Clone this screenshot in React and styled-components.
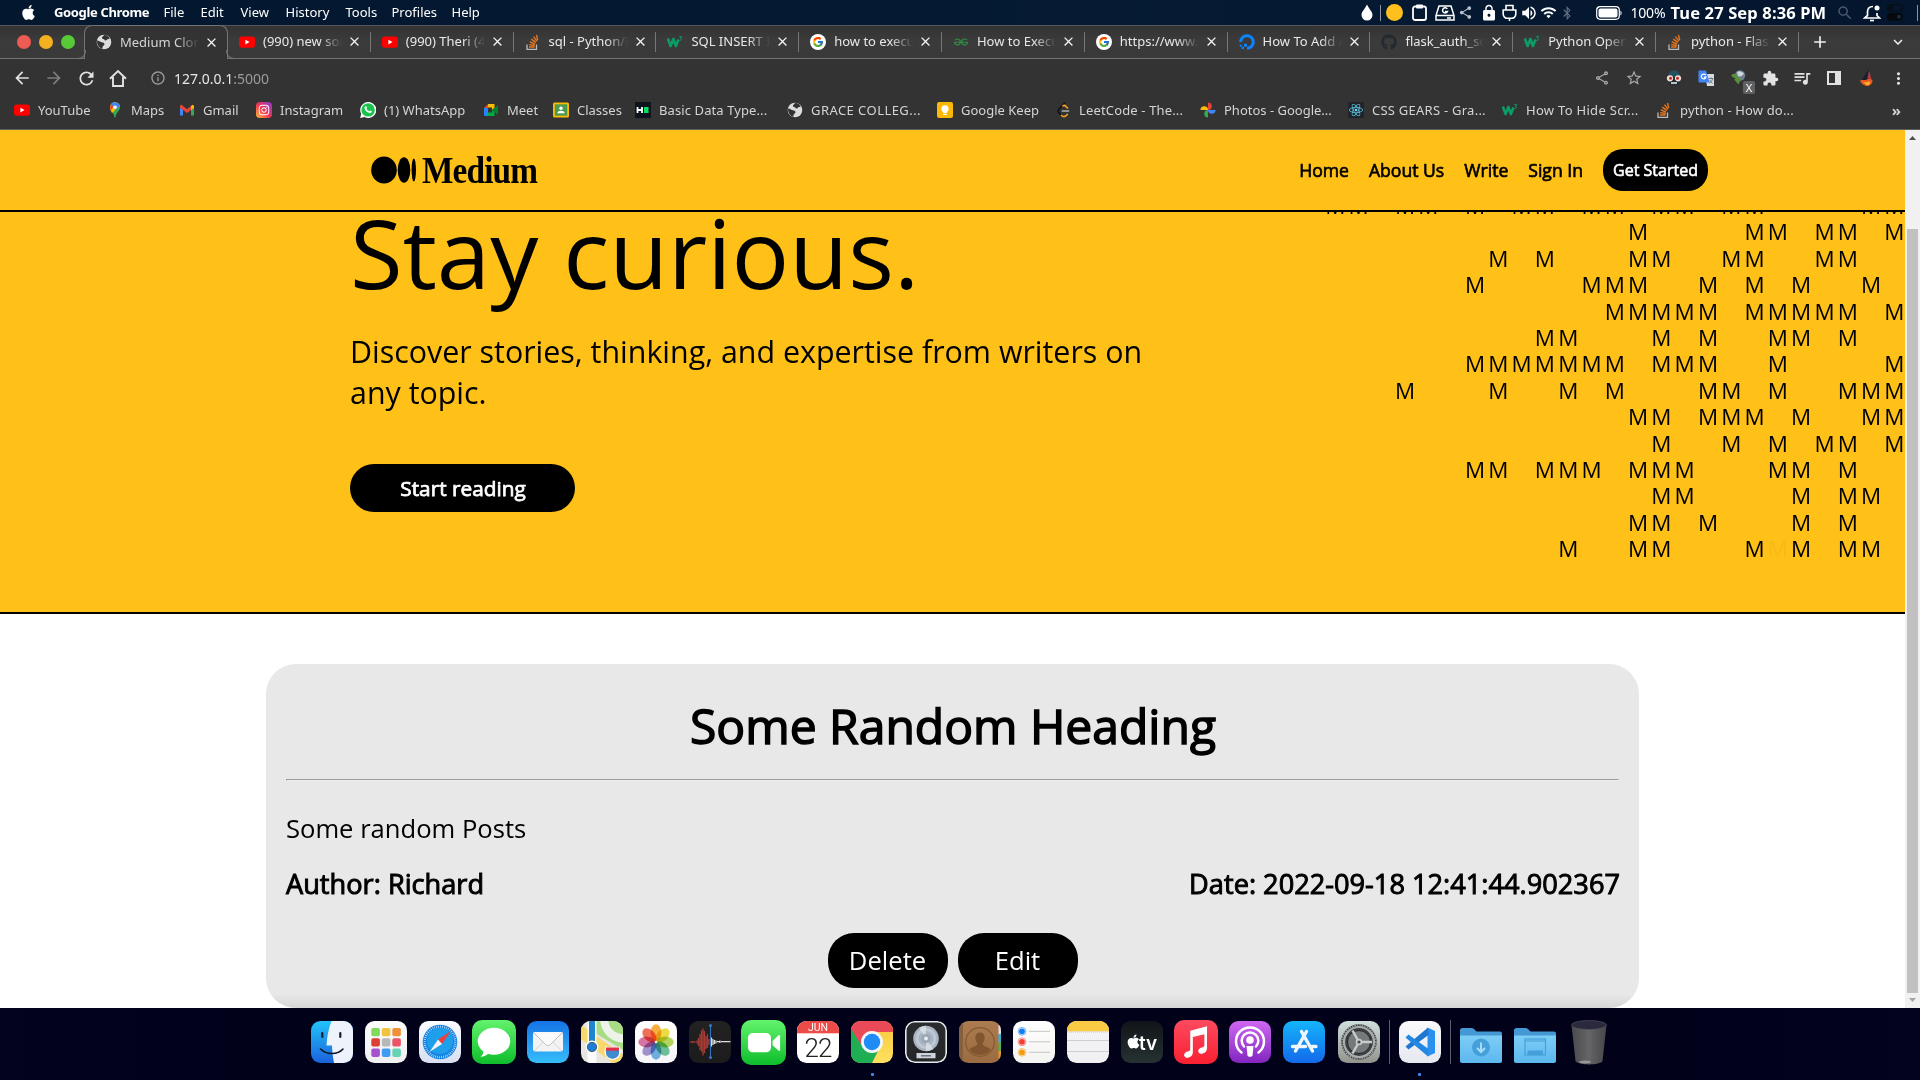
import React from "react";
import styled, { createGlobalStyle, css } from "styled-components";
import { FaApple, FaDigitalOcean, FaGithub, FaInstagram, FaReact, FaBluetoothB } from "react-icons/fa";
import { FcGoogle } from "react-icons/fc";
import { SiGeeksforgeeks } from "react-icons/si";
import {
  MdArrowBack, MdArrowForward, MdRefresh, MdInfoOutline, MdOutlineShare, MdShare, MdStarBorder,
  MdExtension, MdQueueMusic, MdMoreVert, MdClose, MdAdd, MdExpandMore, MdLock, MdVolumeUp, MdWifi,
  MdSearch,
} from "react-icons/md";

const Global = createGlobalStyle`
  * { box-sizing: border-box; }
  html, body { margin: 0; padding: 0; overflow: hidden; background: #02011a; }
  svg { display: block; flex: none; }
  button { font: inherit; border: 0; padding: 0; cursor: pointer; }
`;

const uiFont = `"Noto Sans", "Open Sans", sans-serif`;
const pageFont = `"Open Sans", "Noto Sans", sans-serif`;

const Screen = styled.div`
  width: 1920px;
  height: 1080px;
  display: flex;
  flex-direction: column;
  overflow: hidden;
  font-family: ${uiFont};
`;

/* ---------- system menu bar ---------- */
const MenuBar = styled.header`
  height: 25px;
  flex: none;
  display: flex;
  justify-content: space-between;
  background: linear-gradient(90deg, #03182f, #051a33 60%, #04162e);
  color: #fff;
  font-size: 13px;
`;
const Menus = styled.div`
  display: flex;
  align-items: center;
  padding: 0 0 1px 20px;
  white-space: nowrap;
`;
const MenuItem = styled.span`
  width: ${(p) => p.$w}px;
  letter-spacing: ${(p) => p.$ls || 0}px;
  font-weight: ${(p) => (p.$bold ? 700 : 400)};
`;
const Status = styled.div`
  display: flex;
  align-items: center;
`;
const Slot = styled.span`
  width: ${(p) => p.$w}px;
  height: 24px;
  display: flex;
  align-items: center;
  justify-content: ${(p) => (p.$end ? "flex-end" : "center")};
  padding-right: ${(p) => p.$end || 0}px;
  color: ${(p) => p.$c || "#fff"};
`;
const Percent = styled.span`
  width: 40px;
  font-size: 14px;
  letter-spacing: -0.2px;
  line-height: 23px;
`;
const Clock = styled.span`
  width: 162px;
  font-size: 16.5px;
  letter-spacing: 0.13px;
  line-height: 22px;
  font-weight: 700;
  white-space: nowrap;
`;
const Bar = styled.span`
  width: 1px;
  height: 16px;
  background: #8b95a3;
`;
const Sun = styled.span`
  width: 17px;
  height: 17px;
  border-radius: 50%;
  background: #ffc01e;
`;

/* ---------- browser chrome ---------- */
const Strip = styled.div`
  height: 34px;
  flex: none;
  display: flex;
  border-top: 1px solid #56585c;
  border-bottom: 1px solid #747474;
  background: linear-gradient(#333, #3b3b3b 45%, #393939);
`;
const Lights = styled.div`
  width: 84px;
  display: flex;
  align-items: center;
  gap: 8px;
  padding-left: 17px;
`;
const Light = styled.span`
  width: 14px;
  height: 14px;
  border-radius: 50%;
  background: ${(p) => p.$c};
`;
const Tab = styled.div`
  width: ${(p) => (p.$active ? 144 : 142.8)}px;
  display: flex;
  align-items: center;
  padding: 0 0 1px 11px;
  color: #e8e8e8;
  position: relative;
  ${(p) =>
    p.$active &&
    css`
      color: #d6d6d6;
      background: #333;
      margin-top: -1px;
      margin-bottom: -1px;
      border: 1px solid #747474;
      border-bottom: 0;
      border-radius: 8px 8px 0 0;
      padding-left: 11px;
      &::before,
      &::after {
        content: "";
        position: absolute;
        bottom: 0;
        width: 8px;
        height: 8px;
        border-bottom: 1px solid #747474;
      }
      &::before { left: -8px; border-right: 1px solid #747474; border-bottom-right-radius: 8px; }
      &::after { right: -8px; border-left: 1px solid #747474; border-bottom-left-radius: 8px; }
    `}
`;
const TabTitle = styled.span`
  width: 79px;
  margin: 0 5px 0 8px;
  font-size: 13px;
  line-height: 18px;
  padding-bottom: 1px;
  white-space: nowrap;
  overflow: hidden;
  mask-image: linear-gradient(90deg, #000 72%, transparent);
`;
const TabEdge = styled.span`
  width: 1px;
  height: 20px;
  margin-left: auto;
  background: ${(p) => (p.$hide ? "transparent" : "#777")};
`;
const StripEnd = styled.div`
  flex: 1;
  display: flex;
  align-items: center;
  justify-content: space-between;
  color: #f1f1f1;
  padding: 0 13px 0 11px;
`;
const Toolbar = styled.div`
  height: 39px;
  flex: none;
  display: flex;
  align-items: center;
  background: #333;
  color: #e2e2e2;
  padding: 0 6px 1px;
`;
const Address = styled.div`
  flex: 1;
  display: flex;
  align-items: center;
  padding-left: 16px;
  gap: 8px;
  font-size: 14px;
  color: #9b9b9b;
  b { font-weight: 400; color: #e6e6e6; }
`;
const ToolSlot = styled.span`
  width: 32px;
  display: flex;
  justify-content: center;
  color: ${(p) => p.$c || "#e2e2e2"};
  margin-left: ${(p) => p.$ml || 0}px;
`;
const Bookmarks = styled.div`
  height: 32px;
  flex: none;
  display: flex;
  align-items: center;
  background: #333;
  border-bottom: 1px solid #5c5c5c;
  padding: 0 0 7px 14px;
  color: #d4d4d4;
  font-size: 13px;
`;
const Bookmark = styled.span`
  width: ${(p) => p.$w}px;
  flex: none;
  display: flex;
  align-items: center;
  gap: 8px;
  white-space: nowrap;
  letter-spacing: ${(p) => p.$ls || 0}px;
`;
const More = styled.span`
  margin-left: auto;
  padding-right: 19px;
  font-size: 15px;
  font-weight: 700;
  line-height: 20px;
`;
const Badge = styled.span`
  position: absolute;
  right: -9px;
  bottom: -8px;
  width: 12px;
  height: 13px;
  font-size: 11px;
  line-height: 13px;
  text-align: center;
  border-radius: 2px;
  background: #5f6163;
  color: #fff;
`;
const BadgeHost = styled.span`
  position: relative;
`;

/* ---------- page ---------- */
const Viewport = styled.div`
  height: 878px;
  flex: none;
  display: flex;
  background: #fff;
`;
const Page = styled.main`
  width: 1905px;
  font-family: ${pageFont};
  color: #000;
  display: flex;
  flex-direction: column;
`;
const heavy = (w) => css`
  font-weight: 400;
  -webkit-text-stroke: ${w}px currentColor;
`;
const Nav = styled.nav`
  height: 82px;
  flex: none;
  display: flex;
  align-items: center;
  justify-content: space-between;
  padding: 0 197px 0 371px;
  background: #ffc017;
  border-bottom: 2px solid #000;
`;
const Logo = styled.div`
  display: flex;
  align-items: center;
  gap: 6px;
`;
const Wordmark = styled.span`
  font-family: "Liberation Serif", serif;
  font-weight: 700;
  font-size: 38px;
  line-height: 40px;
  letter-spacing: -1px;
  transform: scaleX(0.877);
  transform-origin: left;
`;
const Links = styled.div`
  display: flex;
  align-items: center;
  gap: 20px;
  font-size: 17.6px;
`;
const Link = styled.span`
  padding-bottom: 1px;
  ${heavy(0.65)}
`;
const StartedButton = styled.button`
  width: 105px;
  height: 42px;
  border-radius: 20px;
  background: #000;
  color: #fff;
  font-size: 16px;
  ${heavy(0.6)}
`;
const Hero = styled.section`
  height: 402px;
  flex: none;
  display: flex;
  justify-content: space-between;
  padding-left: 350px;
  background: #ffc017;
  border-bottom: 2px solid #000;
  overflow: hidden;
`;
const HeroCopy = styled.div`
  width: 820px;
`;
const HeroTitle = styled.h1`
  margin: 0;
  font-size: 96px;
  line-height: 80px;
  font-weight: 400;
`;
const HeroText = styled.p`
  margin: 39px 0 51px;
  font-size: 30.4px;
  line-height: 41px;
`;
const ReadButton = styled.button`
  width: 225px;
  height: 48px;
  border-radius: 25px;
  background: #000;
  color: #fff;
  font-size: 20.8px;
  padding-left: 1px;
  ${heavy(0.75)}
`;
const Pattern = styled.div`
  flex: none;
  margin: -19px -1px 0 0;
  display: grid;
  grid-template-columns: repeat(25, 23.3px);
  grid-auto-rows: 26.42px;
  line-height: 26.42px;
  height: 370px;
  font-size: 22.4px;
  text-align: center;
`;
const Cell = styled.span`
  opacity: ${(p) => (p.$faint ? 0.03 : 1)};
`;
const Card = styled.article`
  width: 1373px;
  height: 344px;
  margin: 50px auto 0;
  padding: 29px 20px 20px;
  border-radius: 30px;
  background: linear-gradient(#e8e8e8 330px, #d6d6d6 344px);
`;
const CardTitle = styled.h2`
  margin: 0 0 21px;
  padding-left: 1px;
  text-align: center;
  font-size: 48px;
  line-height: 65px;
  ${heavy(1.5)}
`;
const Rule = styled.hr`
  margin: 0;
  border: 1px solid;
  border-color: #9a9a9a #eee #eee #9a9a9a;
`;
const CardText = styled.p`
  margin: 30px 0 19px;
  font-size: 25.6px;
  line-height: 35px;
`;
const Meta = styled.div`
  display: flex;
  justify-content: space-between;
  font-size: 27.2px;
  line-height: 37px;
  margin: 0 -1px 31px 0;
  ${heavy(0.95)}
`;
const Actions = styled.div`
  display: flex;
  justify-content: center;
  gap: 10px;
`;
const ActionButton = styled.button`
  width: 120px;
  height: 55px;
  border-radius: 26px;
  background: #000;
  color: #fff;
  font-size: 25.6px;
`;
const Scrollbar = styled.aside`
  width: 15px;
  background: #f1f1f1;
  display: flex;
  flex-direction: column;
  align-items: center;
  padding-top: 6px;
`;
const Thumb = styled.span`
  width: 11px;
  height: 764px;
  margin: 89px 0 5px;
  background: #c1c1c1;
`;

/* ---------- dock ---------- */
const Dock = styled.footer`
  height: 72px;
  flex: none;
  display: flex;
  padding-left: 304.6px;
  background: linear-gradient(90deg, #03021f, #02011a 15%, #02011a 85%, #03021f);
`;
const DockSlot = styled.div`
  width: 54.05px;
  height: 72px;
  display: flex;
  flex-direction: column;
  align-items: center;
  padding-top: ${(p) => (72 - p.$s) / 2 - 2}px;
`;
const DockLine = styled.span`
  width: 1px;
  height: 44px;
  margin: 12px 3px 0;
  background: #5d5d70;
`;
const Running = styled.span`
  width: 3px;
  height: 3px;
  margin-top: 10px;
  border-radius: 1px;
  background: #3f86f0;
`;

/* ---------- small glyphs ---------- */
const House = () => (
  <svg width="18" height="19" viewBox="0 0 18 19"><path d="M1 9.800 9 2l8 7.800M4 8v9h10V8" fill="none" stroke="#e2e2e2" strokeWidth="1.900" /></svg>
);
const YouTube = () => (
  <svg width="16" height="16" viewBox="0 0 16 16"><rect y="2.4" width="16" height="11.4" rx="2.8" fill="#f00" /><path d="M6.4 5.7v4.8l4.1-2.4z" fill="#fff" /></svg>
);
const W3 = () => (
  <svg width="16" height="16" viewBox="0 0 16 16" fill="none" stroke="#0b9d66" strokeLinejoin="round">
    <path d="M.8 4.5 3.6 12 6.4 5l2.5 7 2.6-6.5" strokeWidth="2.6" /><path d="M12.3 2.6h2.4L13.3 4.4c1.6-.2 1.8 2.4-.9 2" strokeWidth="1" />
  </svg>
);
const GoogleBadge = () => (
  <svg width="16" height="16" viewBox="0 0 16 16"><circle cx="8" cy="8" r="8" fill="#fff" /><g transform="translate(2.1 2.1)"><FcGoogle size={11.8} /></g></svg>
);
const GlobeIcon = () => (
  <svg width="16" height="16" viewBox="0 0 16 16"><circle cx="8" cy="8" r="7.3" fill="#dcdcdc" /><path d="M1.2 6.6c2 .2 2.6 1 3.6 1.5 1.1.6 3.4.2 3.7 1.900.2 1.400-1.600 1.400-1.900 2.700l-.3 2.300C3 14.500.5 10 1.200 6.600zM6 3c1.300-.2 1-1 2-2 2.800-.2 4.500 1.200 5.800 3.400-.9.7-2.200.4-2.900 1.400-.7 1-2.700.8-2.500-.4L6 4.600z" fill="#333" /></svg>
);
const MapsPin = () => (
  <svg width="16" height="16" viewBox="0 0 16 16"><path d="M8 .3a5 5 0 0 1 5 5c0 3.600-4 5.200-4.500 10.200h-1C7 10.500 3 8.900 3 5.300a5 5 0 0 1 5-5z" fill="#34a853" /><path d="M8 .3a5 5 0 0 1 4.800 3.600L5 11C4 9 3 7.800 3 5.300a5 5 0 0 1 5-5z" fill="#fbbc04" /><path d="M8 .3a5 5 0 0 1 4.800 3.600L8.400 8 3.700 2.700A5 5 0 0 1 8 .3z" fill="#4285f4" /><path d="M3.900 2.400 6.600 4.600 4 8.200C3.200 7 2.500 4.300 3.900 2.400z" fill="#ea4335" /><circle cx="8" cy="5.300" r="1.800" fill="#fff" /></svg>
);
const Gmail = () => (
  <svg width="16" height="16" viewBox="0 0 16 16"><path d="M1 4v9.500h3V7z" fill="#4285f4" /><path d="M15 4v9.500h-3V7z" fill="#34a853" /><path d="M1 3.500 2.500 2.800 8 7.300l5.500-4.500L15 3.500V5.800L8 11 1 5.800z" fill="#ea4335" /><path d="M12 4.200 13.500 2.800 15 4v2L12 8z" fill="#fbbc04" /></svg>
);
const Insta = () => (
  <svg width="16" height="16" viewBox="0 0 16 16"><defs><linearGradient id="ig" x1="0" y1="1" x2="1" y2="0"><stop offset="0" stopColor="#ffc13b" /><stop offset=".45" stopColor="#f3344f" /><stop offset="1" stopColor="#8a3ad8" /></linearGradient></defs><rect width="16" height="16" rx="4" fill="url(#ig)" /><g transform="translate(2 2)"><FaInstagram size={12} color="#fff" /></g></svg>
);
const WhatsApp = () => (
  <svg width="16" height="16" viewBox="0 0 16 16"><path d="M8 0a8 8 0 1 1-3.500 15L.2 16l1-4.100A8 8 0 0 1 8 0z" fill="#fff" /><circle cx="8.100" cy="7.900" r="6.700" fill="#18c34e" /><path d="M5.600 4.300c.7-.4 1 .2 1.400 1.400.1.500-.5.800-.5 1.100.5 1.200 1.600 2 2.700 2.500.4 0 .7-1 1.100-.9l1.500.8c.1 1.200-.9 1.800-1.900 1.700C6.800 10.600 4.300 7.700 4.600 5.700c.1-.6.5-1.200 1-1.400z" fill="#fff" /></svg>
);
const Meet = () => (
  <svg width="16" height="16" viewBox="0 0 16 16"><path d="M1 6l4-4v4z" fill="#ea4335" /><path d="M5 2h6.500v4L9 8V5.600H5z" fill="#fbbc04" /><path d="M1 6h4v8H2.200C1.500 14 1 13.500 1 12.800z" fill="#2684fc" /><path d="M5 10.400h4V8l2.500 2v4H5z" fill="#00ac47" /><path d="M9 8l2.500-2L15 3v10l-3.500-3z" fill="#00832d" /></svg>
);
const Classes = () => (
  <svg width="16" height="16" viewBox="0 0 16 16"><rect y=".5" width="16" height="15" rx="1.500" fill="#fbbc04" /><rect x="1.800" y="2.300" width="12.400" height="11.400" fill="#4e9a50" /><circle cx="8" cy="6.200" r="1.700" fill="#fff" /><path d="M4.300 11.300C4.300 8 11.700 8 11.700 11.300z" fill="#fff" /></svg>
);
const Hacker = () => (
  <svg width="16" height="16" viewBox="0 0 16 16"><rect width="16" height="16" fill="#0e141e" /><path d="M2.500 5v6M7 5v6M2.500 8H7" stroke="#fff" strokeWidth="1.800" /><rect x="9" y="5" width="4.500" height="6" fill="#05e062" /></svg>
);
const Keep = () => (
  <svg width="16" height="16" viewBox="0 0 16 16"><rect width="16" height="16" rx="2" fill="#fbb904" /><circle cx="8" cy="6.800" r="3.600" fill="#fff" /><path d="M6.200 9h3.600v2H6.200zM6.200 11.700h3.600v1.300H6.200z" fill="#fff" /></svg>
);
const Leet = () => (
  <svg width="16" height="16" viewBox="0 0 16 16" fill="none" strokeLinecap="round" strokeWidth="1.700"><path d="M9.800 1 4 7c-1 1.200-1 2.600 0 3.700l1.500 1.800" stroke="#111" /><path d="M8 3.800c1-.6 2.200-.2 3.100.8l1.400 1.400M6.500 13.500c1.600 1.500 3.500 1.400 4.800 0l1-1" stroke="#f89f1b" /><path d="M7.500 9h6" stroke="#b3b3b3" /></svg>
);
const Pinwheel = () => (
  <svg width="16" height="16" viewBox="0 0 16 16"><path d="M8 8V.5A3.750 3.750 0 0 1 8 8z" fill="#ea4335" /><path d="M8 8h7.500A3.750 3.750 0 0 1 8 8z" fill="#4285f4" /><path d="M8 8v7.500A3.750 3.750 0 0 1 8 8z" fill="#34a853" /><path d="M8 8H.5A3.750 3.750 0 0 1 8 8z" fill="#fbbc04" /></svg>
);
const ReactBadge = () => (
  <svg width="16" height="16" viewBox="0 0 16 16"><rect width="16" height="16" rx="2" fill="#20232a" /><g transform="translate(1 1)"><FaReact size={14} color="#61dafb" /></g></svg>
);
const Stack = () => (
  <svg width="16" height="16" viewBox="0 0 16 16" fill="none" strokeWidth="1.400"><path d="M2 10.500v4.800h9.500v-4.800" stroke="#bcbbbb" strokeWidth="1.300" /><path d="M4 13h5.600M4.200 10.600l5.500.9M4.800 7.900l5.200 2.100M6.300 5.100l4.600 3.300M8.500 2.700l3.400 4.500M11.500.8l1.200 5.400" stroke="#e8761f" /></svg>
);
const Ninja = () => (
  <svg width="16" height="16" viewBox="0 0 16 16"><path d="M2 7C2 2 5 .5 8 .5S14 2 14 7z" fill="#25505f" /><path d="M3 7h10v7.500H3z" fill="#1b2a33" /><circle cx="4" cy="8.300" r="3.100" fill="#f2ded3" /><circle cx="12" cy="8.300" r="3.100" fill="#f2ded3" /><circle cx="4.500" cy="8.300" r="1.500" fill="#c1271d" /><circle cx="11.500" cy="8.300" r="1.500" fill="#c1271d" /><path d="M5 12h6v2H5z" fill="#b9c5ca" /></svg>
);
const Translate = () => (
  <svg width="17" height="17" viewBox="0 0 17 17"><path d="M7 4h9v12H9z" fill="#d6dce2" /><path d="M10.500 8.500h5M13 7.500v1M14.500 9c-.5 2-2 3.500-3.500 4M11.500 10l3 3.500" stroke="#6c7a85" fill="none" /><path d="M1 .5h7l3.500 12H1.500C1 12.500.5 12 .5 11.500V1z" fill="#4285f4" /><path d="M7.800 5.300A2.400 2.400 0 1 0 8 7.100H5.800" stroke="#fff" strokeWidth="1.200" fill="none" /></svg>
);
const Idm = () => (
  <svg width="16" height="16" viewBox="0 0 16 16"><circle cx="10" cy="5.500" r="5.200" fill="#6f7f8e" /><path d="M7 2c3-2 5 1 7 1-1 3-4 4-6 3z" fill="#ccd6dd" /><path d="M8.500 14.500 4 9.500l1.800-.5L1.200 6C2.200 3.500 4.500 3 6.500 5l3.200 4 1.500-.5z" fill="#56913a" /></svg>
);
const Sail = () => (
  <svg width="17" height="18" viewBox="0 0 17 18"><path d="M11 0 3 12h10z" fill="#1c1d2c" /><path d="M11 1 8.500 11l5.500 1z" fill="#3a3a4e" /><path d="M11 1.500 10 9l3.500 2z" fill="#c43b3b" /><path d="M2 11.500c3-1.500 5 .5 7-1s4-.5 5.500 1c0 3.500-2.500 5.500-6 5.500C5 16 3 14.500 2 11.500z" fill="#e8591f" /><path d="M5 13c2 0 5 1 6-1 2 2 1 4-2 4.500z" fill="#f7b32a" /></svg>
);

/* ---------- dock icons, drawn on a 42 unit tile ---------- */
const Tile = ({ s = 42, id, from, to, children, plain }) => (
  <svg width={s} height={s} viewBox="0 0 42 42">
    <defs>
      <linearGradient id={id} x1="0" y1="0" x2="0" y2="1"><stop offset="0" stopColor={from} /><stop offset="1" stopColor={to} /></linearGradient>
      <clipPath id={id + "c"}><rect width="42" height="42" rx="9.500" /></clipPath>
    </defs>
    {!plain && <rect width="42" height="42" rx="9.500" fill={`url(#${id})`} />}
    <g clipPath={plain ? undefined : `url(#${id}c)`}>{children}</g>
  </svg>
);
const Finder = () => (
  <Tile id="fi" from="#22c4fa" to="#1a62dc">
    <path d="M20.500 0C17.500 8 16 16 15.500 24.500H21c.2 6 .8 12 2.200 18H42V0z" fill="#eef3fb" />
    <path d="M11.300 12v4M29.300 12v4" stroke="#10202e" strokeWidth="2.200" strokeLinecap="round" />
    <path d="M9.500 28c6 6 17 6 22.500 0" stroke="#0b1620" strokeWidth="1.600" fill="none" strokeLinecap="round" />
  </Tile>
);
const pads = ["#82da5a", "#f2c340", "#f0913a", "#dc4034", "#b8b8b8", "#ec5468", "#a552cf", "#3e9df2", "#66d3b4"];
const Launchpad = () => (
  <Tile id="la" from="#fdfdfd" to="#efefef">
    {pads.map((c, i) => <rect key={c} x={6.3 + (i % 3) * 10.5} y={7 + Math.floor(i / 3) * 10.3} width="8.600" height="8.300" rx="1.800" fill={c} />)}
  </Tile>
);
const Safari = () => (
  <Tile id="sa" from="#fbfcfe" to="#d9dff0">
    <circle cx="21" cy="21" r="17.300" fill="#1684e4" /><circle cx="21" cy="20" r="13" fill="#22aef0" opacity=".65" />
    <circle cx="21" cy="21" r="15.300" fill="none" stroke="#e4f3ff" strokeWidth="2.300" strokeDasharray=".6 1.400" />
    <path d="M32 10 19 18.500 23 23z" fill="#f23d3a" /><path d="M10.500 31 19 18.500 23 23z" fill="#f2f4f6" />
  </Tile>
);
const Messages = () => (
  <Tile s={44} id="me" from="#62f36d" to="#0fbd2c">
    <ellipse cx="21" cy="20.300" rx="15.500" ry="12.800" fill="#fff" /><path d="M11 29c0 3-1 4.500-3 6 4 0 6.500-1.500 8-3.500z" fill="#fff" />
  </Tile>
);
const Mail = () => (
  <Tile id="ma" from="#1573e6" to="#36bdfa">
    <rect x="6" y="11" width="30" height="19.500" rx="2" fill="#f3f3f3" /><path d="M7 30 17 20.500M35 30 25 20.500" stroke="#ccc" strokeWidth=".8" /><path d="M6.500 11.500 18.500 23.500c1.500 1.400 3.500 1.400 5 0l12-12" fill="#fafafa" stroke="#bbb" strokeWidth=".9" />
  </Tile>
);
const Maps = () => (
  <Tile id="mp" from="#e9e5df" to="#e9e5df">
    <path d="M0 4 42 34v8H32L0 18z" fill="#f6d96a" /><path d="M13 0h29v29L14 12z" fill="#a8dd86" /><path d="M19-2c1 14 10 23 25 24v-8C33 12 28 8 27-2z" fill="#eef3ea" />
    <path d="M6.500 0h9v42h-9z" fill="#fbfbfb" /><path d="M8 0h6v24H8z" fill="#1f84cb" /><circle cx="11" cy="26" r="6.500" fill="#fff" /><circle cx="11" cy="26" r="4.700" fill="#1e7fd2" stroke="#1b3850" strokeWidth=".7" />
    <path d="M25 26c5 1.500 8 1.500 13 0 2 6 1 11-6.500 12.500C24 37 23 32 25 26z" fill="#3f8bd0" stroke="#fff" strokeWidth="1.200" /><path d="M25 26.500h13v3.300H24.800z" fill="#e0314b" />
  </Tile>
);
const petals = ["#f7a325", "#e9d727", "#a8cf43", "#58b487", "#5aa2d8", "#8f83c4", "#d35f94", "#ee5a40"];
const Petal = styled.ellipse`
  mix-blend-mode: multiply;
`;
const Photos = () => (
  <Tile id="ph" from="#fff" to="#f6f6fa">
    {petals.map((c, i) => <Petal key={c} cx="21" cy="11.700" rx="5.400" ry="8.400" fill={c} opacity=".87" transform={`rotate(${i * 45} 21 21)`} />)}
  </Tile>
);
const Voice = () => (
  <Tile id="vo" from="#222" to="#1c1c1c">
    <path d="M1.500 21h5M8 19.500v3M9.500 17v8M11 13v16M12.500 9.500v21M14 7.500v27M15.500 10v22M17 15v13M18.500 13v14M20 18v6" stroke="#a83c34" strokeWidth="1.300" />
    <path d="M22.500 16.500v9M24 18v6M25.500 19v4M27 19.500v3M28 20.700h3.500M31 19.500v2.500M32 20.700h9.500" stroke="#ddd" strokeWidth="1.200" /><path d="M21.500 4v33" stroke="#3676c6" strokeWidth="1" /><circle cx="21.500" cy="4.500" r="1.500" fill="#3676c6" /><circle cx="21.500" cy="36.500" r="1.500" fill="#3676c6" />
  </Tile>
);
const FaceTime = () => (
  <Tile s={45} id="fa" from="#62f36d" to="#0fbd2c"><rect x="6.500" y="12.200" width="21.500" height="18" rx="4.500" fill="#fff" /><path d="M29.500 19.500 35 14.300c.8-.7 1.500-.4 1.500.6v13c0 1-.7 1.300-1.500.6l-5.500-5z" fill="#fff" /></Tile>
);
const Calendar = () => (
  <Tile id="ca" from="#fff" to="#fff"><rect width="42" height="12.300" fill="#ec4b48" />
    <text x="21" y="10.300" textAnchor="middle" fontFamily="Roboto, sans-serif" fontSize="10.500" fill="#fff">JUN</text>
    <text x="21" y="36" textAnchor="middle" fontFamily="Roboto, sans-serif" fontWeight="300" fontSize="26" letterSpacing="-1" fill="#222">22</text>
  </Tile>
);
const Chrome = () => (
  <Tile id="ch" from="#f9c83b" to="#ffe060">
    <path d="M0 0h42v11H22L10 27 0 10z" fill="#ea4a58" /><path d="M0 8 11 25l16 5-6 12H0z" fill="#1fae53" /><circle cx="21" cy="21" r="11" fill="#f2f5fa" /><circle cx="21" cy="21" r="8.200" fill="#1f8cf6" />
  </Tile>
);
const Logic = () => (
  <Tile id="lo" from="#2a2c2e" to="#232526"><rect x=".8" y=".8" width="40.400" height="40.400" rx="9" fill="none" stroke="#e6e9ec" strokeWidth="1.600" /><circle cx="21" cy="17.500" r="12.800" fill="#a9b4c2" /><circle cx="21" cy="17.500" r="9" fill="none" stroke="#bfc8d4" strokeWidth="3" /><path d="M21 17.500 14 6.800a12.800 12.800 0 0 1 7-2.100zM21 17.500 28 28.200a12.800 12.800 0 0 1-7 2.100z" fill="#dfe5ed" opacity=".7" /><circle cx="21" cy="17.500" r="4.500" fill="#9aa5b3" /><circle cx="21" cy="17.500" r="2" fill="#e6eaf0" /><rect x="11.500" y="32" width="19" height="5.300" fill="#cfd5dc" /><path d="M16 34.700h10" stroke="#6d747c" strokeWidth="1.400" /></Tile>
);
const Contacts = () => (
  <Tile id="co" from="#ac7b4f" to="#9b6c42"><path d="M0 0h4v42H0z" fill="#85603f" /><path d="M39.500 4h3v9h-3z" fill="#ddd" /><path d="M39.500 13h3v8h-3z" fill="#3eb2d4" /><path d="M39.500 21h3v9h-3z" fill="#58b14c" /><path d="M39.500 30h3v8h-3z" fill="#e09a2e" /><circle cx="21" cy="21" r="14.300" fill="none" stroke="#85592f" strokeWidth="1.200" /><path d="M21 11.500c6 0 5.500 8 2.500 11 .3 3.500 7 3 8 6.500-5.500 6.500-15.500 6.500-21 0 1-3.500 7.700-3 8-6.500-3-3-3.500-11 2.500-11z" fill="#80552f" /></Tile>
);
const Reminders = () => (
  <Tile id="re" from="#fff" to="#f3f3f1">{["#0f7df5", "#f23c34", "#f79a0c"].map((c, i) => <g key={c}><circle cx="9" cy={10.3 + i * 10.5} r="3.900" fill="none" stroke={c} strokeWidth=".8" opacity=".7" /><circle cx="9" cy={10.3 + i * 10.5} r="2.900" fill={c} /><path d={`M16 ${10.3 + i * 10.5}h21`} stroke="#c5c5c5" /></g>)}</Tile>
);
const Notes = () => (
  <Tile id="no" from="#f4f3f5" to="#f0eff1"><rect width="42" height="10.300" fill="#fbca45" /><path d="M0 11h42" stroke="#bdb9b0" strokeDasharray="1 1" strokeWidth=".8" /><path d="M0 19.500h42M0 30.500h42" stroke="#cfcdd2" /></Tile>
);
const AppleTV = () => (
  <Tile id="tv" from="#101418" to="#263231"><g transform="translate(4.500 12.500)"><FaApple size={16} color="#fff" /></g><text x="18" y="28.500" fontFamily="Inter, sans-serif" fontWeight="600" fontSize="19" fill="#fff">tv</text></Tile>
);
const Music = () => (
  <Tile s={44} id="mu" from="#fb4a60" to="#fa2032"><path d="M15.500 10.200 31.500 6v21c0 3-2 4.700-4.800 5.200-3.300.5-4.700-3.200-2.200-5 1.500-1 4.500-.8 4.500-3V13.500l-11 2.800v14.500c0 3-1.800 4.700-4.700 5.200-3.500.5-4.900-3.200-2.300-5 1.500-1 4.500-.8 4.500-3z" fill="#fff" /></Tile>
);
const Podcasts = () => (
  <Tile id="po" from="#cf68f2" to="#8226c0"><g fill="none" stroke="#fff" strokeWidth="2.500" strokeLinecap="round"><path d="M12.500 31.500a14 14 0 1 1 17 0" /><path d="M15 25.500a8.300 8.300 0 1 1 12 0" /></g><circle cx="21" cy="19" r="3.800" fill="#fff" /><path d="M17.500 25h7l-1 9.500c-.3 1.700-4.700 1.700-5 0z" fill="#fff" /></Tile>
);
const AppStore = () => (
  <Tile id="as" from="#15b4fb" to="#1369ea"><g stroke="#eef6fe" strokeWidth="3.400" strokeLinecap="round" fill="none"><path d="M18.500 10.500 29.500 30M23.500 10.500 12.500 30M9.500 25.500h13M29 25.500h4" /></g></Tile>
);
const Settings = () => (
  <Tile id="se" from="#cfdfdd" to="#93938c"><circle cx="21" cy="21" r="17.800" fill="#3e4042" /><circle cx="21" cy="21" r="15" fill="none" stroke="#a9adad" strokeWidth="2.200" /><circle cx="21" cy="21" r="17" fill="none" stroke="#b0b4b4" strokeWidth="1.200" strokeDasharray="1.300 1.200" /><circle cx="21" cy="21" r="11.500" fill="#74797b" stroke="#24272a" /><path d="M21 21 14.500 9.500M21 21h13M21 21 14.500 32.500" stroke="#c8cccb" strokeWidth="2.500" /><circle cx="21" cy="21" r="3.300" fill="#c8cccb" /><circle cx="21" cy="21" r="1.600" fill="#44484b" /></Tile>
);
const Code = () => (
  <Tile id="vs" from="#fafafc" to="#e6e8f0"><path d="M28.500 6.500 36 10v22l-7.500 3.500z" fill="#2a90ee" /><path d="M29 6.500 6.500 25.500l3 3L29.500 14z" fill="#1f78cf" /><path d="M29 35.500 6.500 16.500l3-3L29.500 28z" fill="#2289e2" /></Tile>
);
const Folder = ({ kind }) => (
  <Tile id={"fo" + kind} from="#7dcdf6" to="#5cb8ee" plain>
    <path d="M0 9.500C0 8 1 7 2.500 7h9c1 0 1.700.3 2.500 1l2.500 2.500H40c1.200 0 2 .8 2 2V20H0z" fill="#4498d3" />
    <path d="M0 14.500h42V40c0 1-.8 2-2 2H2c-1.200 0-2-1-2-2z" fill={`url(#fo${kind})`} />
    {kind === "down" ? <><circle cx="21" cy="26.500" r="9" fill="#459fda" /><path d="M21 21.500v9M17 27l4 4 4-4" stroke="#a5dcf8" strokeWidth="2" fill="none" /></> : <><rect x="11" y="18" width="20.500" height="16" fill="none" stroke="#459fda" strokeWidth="1.200" /><path d="M11 20h20.500" stroke="#459fda" /><path d="M13.500 29.500h15.500V34H13.500z" fill="#459fda" /></>}
  </Tile>
);
const Trash = () => (
  <svg width="36" height="46" viewBox="0 0 36 46"><defs><linearGradient id="tr" x1="0" x2="1"><stop offset="0" stopColor="#4a4a4e" /><stop offset=".5" stopColor="#656567" /><stop offset="1" stopColor="#464649" /></linearGradient></defs><path d="M.5 5 4.500 41c2 4.500 25 4.500 27 0L35.500 5z" fill="url(#tr)" /><ellipse cx="18" cy="5" rx="17.500" ry="4.500" fill="#2b2a3d" stroke="#57576a" strokeWidth=".6" /><ellipse cx="14" cy="42" rx="6" ry="1.500" fill="#b0b0b0" opacity=".7" /></svg>
);

/* ---------- data ---------- */
const menus = [["File", 37], ["Edit", 40], ["View", 45], ["History", 60], ["Tools", 46], ["Profiles", 60], ["Help", 40]];
const tabs = [
  [GlobeIcon, "Medium Clone"],
  [YouTube, "(990) new songs"],
  [YouTube, "(990) Theri (4K"],
  [Stack, "sql - Python/Flask"],
  [W3, "SQL INSERT INTO"],
  [GoogleBadge, "how to execute"],
  [() => <SiGeeksforgeeks size={14} color="#2f8d46" />, "How to Execute"],
  [GoogleBadge, "https://www.goo"],
  [() => <FaDigitalOcean size={16} color="#0a84ff" />, "How To Add Auth"],
  [() => <FaGithub size={16} color="#24292f" />, "flask_auth_scotch"],
  [W3, "Python Operators"],
  [Stack, "python - Flask"],
];
const bookmarks = [
  [YouTube, "YouTube", 93], [MapsPin, "Maps", 72], [Gmail, "Gmail", 77], [Insta, "Instagram", 104], [WhatsApp, "(1) WhatsApp", 123],
  [Meet, "Meet", 70], [Classes, "Classes", 82], [Hacker, "Basic Data Type...", 152, 0.1], [GlobeIcon, "GRACE COLLEG...", 150, 0.45],
  [Keep, "Google Keep", 118], [Leet, "LeetCode - The...", 145, 0.15], [Pinwheel, "Photos - Google...", 148], [ReactBadge, "CSS GEARS - Gra...", 154, 0.25],
  [W3, "How To Hide Scr...", 154, 0.3], [Stack, "python - How do...", 160, 0.15],
];
const pattern = [
  "MM.MM.M.MM.MM.MM.MM....MM",
  ".............M....MM.MM.M",
  ".......M.M...MM..MM..MM..",
  "......M....MMM..M.M.M..M.",
  "............MMMMM.MMMMM.M",
  ".........MM...M.M..MM.M..",
  "......MMMMMMM.MMM..M....M",
  "...M...M..M.M...MM.M..MMM",
  ".............MM.MMM.M..MM",
  "..............M..M.M.MM.M",
  "......MM.MMM.MMM...MM.M..",
  "..............MM....M.MM.",
  ".............MM.M...M.M..",
  "..........M..MM...MmM.MM.",
];
const dockApps = [
  [Finder], [Launchpad], [Safari], [Messages, 44], [Mail], [Maps], [Photos], [Voice], [FaceTime, 45], [Calendar], [Chrome, 42, true],
  [Logic], [Contacts], [Reminders], [Notes], [AppleTV], [Music, 44], [Podcasts], [AppStore], [Settings],
];

export default function App() {
  return (
    <Screen>
      <Global />
      <MenuBar>
        <Menus>
          <MenuItem $w={34}><FaApple size={17} /></MenuItem>
          <MenuItem $w={109.5} $bold $ls={-0.35}>Google Chrome</MenuItem>
          {menus.map(([t, w]) => <MenuItem key={t} $w={w}>{t}</MenuItem>)}
        </Menus>
        <Status>
          <Slot $w={22}>
            <svg width="12" height="17" viewBox="0 0 12 17"><path d="M6 .5c2 4.500 5.500 7 5.500 10.500a5.500 5.500 0 0 1-11 0C.5 7.500 4 5 6 .5z" fill="#fff" /></svg>
          </Slot>
          <Slot $w={6}><Bar /></Slot>
          <Slot $w={22}><Sun /></Slot>
          <Slot $w={28}>
            <svg width="15" height="17" viewBox="0 0 15 17"><rect x="1" y="2.500" width="13" height="13.500" rx="2" fill="none" stroke="#fff" strokeWidth="1.800" /><rect x="4" y=".5" width="7" height="4" rx="1" fill="#fff" /></svg>
          </Slot>
          <Slot $w={22}>
            <svg width="20" height="16" viewBox="0 0 20 16" fill="none" stroke="#fff" strokeWidth="1.500"><path d="M4 1h12l3 9.500v4.500H1v-4.500zM1 10.500h18" /><path d="M12.300 3.800a2.600 2.600 0 1 0 .2 2.600H10M12 13h4" /></svg>
          </Slot>
          <Slot $w={20} $c="#b9c3cf"><MdShare size={15} /></Slot>
          <Slot $w={26}><MdLock size={18} /></Slot>
          <Slot $w={16}>
            <svg width="15" height="17" viewBox="0 0 15 17" fill="none" stroke="#fff" strokeWidth="1.600"><path d="M4 6V1.500h7V6M1.200 6h12.600v4c0 3-2.500 4.300-4 4.300H5.200c-1.500 0-4-1.300-4-4.300zM7.500 14v3" /></svg>
          </Slot>
          <Slot $w={22}><MdVolumeUp size={18} /></Slot>
          <Slot $w={18}><MdWifi size={17} /></Slot>
          <Slot $w={18} $c="#5f6f84"><FaBluetoothB size={14} /></Slot>
          <Slot $w={55} $end={9}>
            <svg width="26" height="14" viewBox="0 0 26 14"><rect x=".7" y=".7" width="22.600" height="12.600" rx="3.500" fill="none" stroke="#fff" strokeWidth="1.200" /><rect x="2.500" y="2.500" width="19" height="9" rx="2" fill="#fff" /><path d="M24.500 4.500c1.500 1 1.500 4 0 5z" fill="#fff" /></svg>
          </Slot>
          <Percent>100%</Percent>
          <Clock>Tue 27 Sep 8:36 PM</Clock>
          <Slot $w={24} $c="#4a5769"><MdSearch size={18} /></Slot>
          <Slot $w={30}>
            <svg width="18" height="18" viewBox="0 0 18 18" fill="none" stroke="#fff" strokeWidth="1.700"><path d="M10 2.500C6 2.500 4.500 5 4.500 8v3.500L1.500 14h15l-2.500-2.500V9" /><path d="M7 16.500h4" /><circle cx="14" cy="4" r="2.500" fill="#fff" stroke="none" /></svg>
          </Slot>
          <Slot $w={16}>
            <svg width="16" height="17" viewBox="0 0 16 17"><rect x=".6" y=".6" width="14.800" height="6.400" rx="3.200" fill="none" stroke="#0a0d12" strokeWidth="1.200" /><circle cx="4" cy="3.800" r="2" fill="#0a0d12" /><rect y="9" width="16" height="7.500" rx="3.700" fill="#05080d" /><circle cx="12" cy="12.700" r="2" fill="#1c2c40" /></svg>
          </Slot>
          <Slot $w={17.5} $end={2}><Bar /></Slot>
        </Status>
      </MenuBar>

      <Strip>
        <Lights><Light $c="#ee5c54" /><Light $c="#f5b01f" /><Light $c="#58ca37" /></Lights>
        {tabs.map(([Icon, title], i) => (
          <Tab key={title} $active={i === 0}>
            <Slot $w={16}><Icon /></Slot>
            <TabTitle>{title}</TabTitle>
            <MdClose size={15} color="#f5f5f5" />
            <TabEdge $hide={i === 0} />
          </Tab>
        ))}
        <StripEnd><MdAdd size={20} /><MdExpandMore size={18} /></StripEnd>
      </Strip>

      <Toolbar>
        <ToolSlot><MdArrowBack size={20} /></ToolSlot>
        <ToolSlot $c="#7d7d7d"><MdArrowForward size={20} /></ToolSlot>
        <ToolSlot><MdRefresh size={21} /></ToolSlot>
        <ToolSlot><House /></ToolSlot>
        <Address><MdInfoOutline size={16} /><span><b>127.0.0.1</b>:5000</span></Address>
        <ToolSlot $c="#a9a9a9"><MdOutlineShare size={16} /></ToolSlot>
        <ToolSlot $c="#a9a9a9"><MdStarBorder size={18} /></ToolSlot>
        <ToolSlot $ml={8}><Ninja /></ToolSlot>
        <ToolSlot><Translate /></ToolSlot>
        <ToolSlot><BadgeHost><Idm /><Badge>X</Badge></BadgeHost></ToolSlot>
        <ToolSlot><MdExtension size={17} /></ToolSlot>
        <ToolSlot><MdQueueMusic size={20} /></ToolSlot>
        <ToolSlot><svg width="14" height="14" viewBox="0 0 14 14"><path d="M0 0h14v14H0zM2 2v10h6V2z" fill="#e2e2e2" fillRule="evenodd" /></svg></ToolSlot>
        <ToolSlot><Sail /></ToolSlot>
        <ToolSlot><MdMoreVert size={19} /></ToolSlot>
      </Toolbar>

      <Bookmarks>
        {bookmarks.map(([Icon, title, w, ls]) => (
          <Bookmark key={title} $w={w} $ls={ls}><Icon />{title}</Bookmark>
        ))}
        <More>»</More>
      </Bookmarks>

      <Viewport>
        <Page>
          <Nav>
            <Logo>
              <svg width="45" height="28" viewBox="0 0 45 28"><ellipse cx="13" cy="14" rx="12.800" ry="13.600" /><ellipse cx="33" cy="14" rx="6.300" ry="12.800" /><ellipse cx="42.800" cy="14" rx="2.200" ry="11.500" /></svg>
              <Wordmark>Medium</Wordmark>
            </Logo>
            <Links>
              <Link>Home</Link><Link>About Us</Link><Link>Write</Link><Link>Sign In</Link>
              <StartedButton>Get Started</StartedButton>
            </Links>
          </Nav>
          <Hero>
            <HeroCopy>
              <HeroTitle>Stay curious.</HeroTitle>
              <HeroText>Discover stories, thinking, and expertise from writers on<br />any topic.</HeroText>
              <ReadButton>Start reading</ReadButton>
            </HeroCopy>
            <Pattern>
              {pattern.flatMap((row, r) => [...row].map((c, i) => (
                <Cell key={r + "-" + i} $faint={c === "m"}>{c === "." ? "" : "M"}</Cell>
              )))}
            </Pattern>
          </Hero>
          <Card>
            <CardTitle>Some Random Heading</CardTitle>
            <Rule />
            <CardText>Some random Posts</CardText>
            <Meta><span>Author: Richard</span><span>Date: 2022-09-18 12:41:44.902367</span></Meta>
            <Actions><ActionButton>Delete</ActionButton><ActionButton>Edit</ActionButton></Actions>
          </Card>
        </Page>
        <Scrollbar>
          <svg width="7" height="4" viewBox="0 0 7 4"><path d="M0 4 3.500 0 7 4z" fill="#505050" /></svg>
          <Thumb />
          <svg width="7" height="4" viewBox="0 0 7 4"><path d="M0 0 3.500 4 7 0z" fill="#a3a3a3" /></svg>
        </Scrollbar>
      </Viewport>

      <Dock>
        {dockApps.map(([Icon, s = 42, on], i) => (
          <DockSlot key={i} $s={s}><Icon />{on && <Running />}</DockSlot>
        ))}
        <DockLine />
        <DockSlot $s={42}><Code /><Running /></DockSlot>
        <DockLine />
        <DockSlot $s={42}><Folder kind="down" /></DockSlot>
        <DockSlot $s={42}><Folder kind="desk" /></DockSlot>
        <DockSlot $s={44}><Trash /></DockSlot>
      </Dock>
    </Screen>
  );
}
